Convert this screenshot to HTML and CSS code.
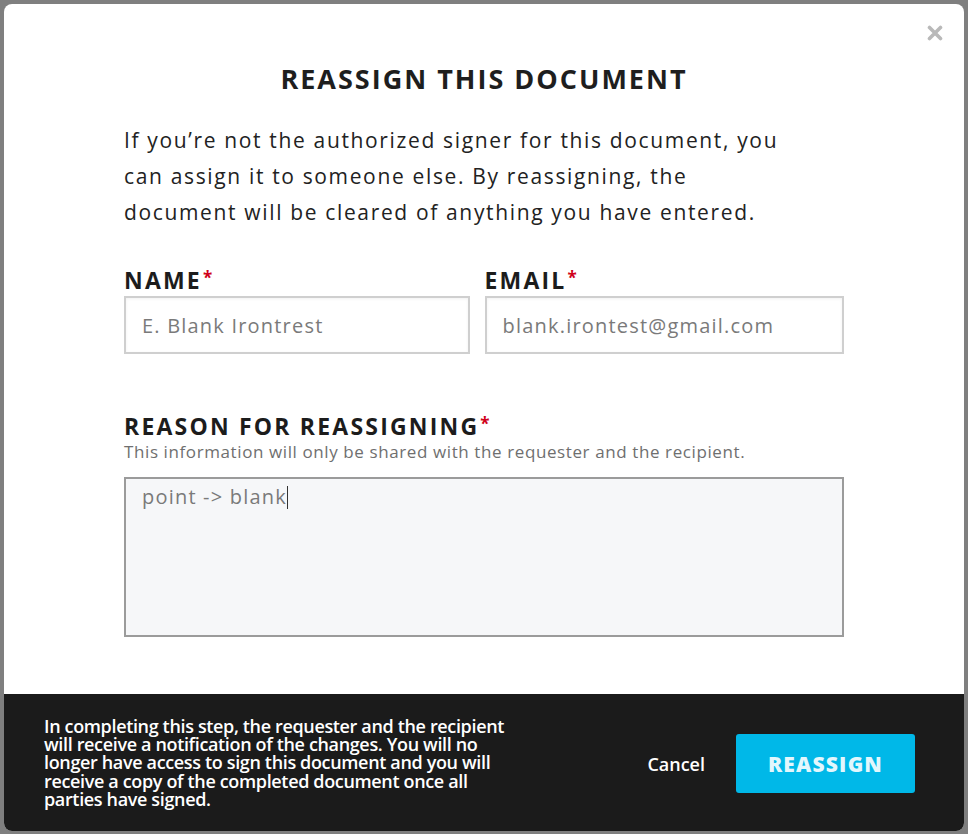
FILE: index.html
```html
<!DOCTYPE html>
<html>
<head>
<meta charset="utf-8">
<link rel="stylesheet" href="styles.css">
</head>
<body>
<div class="modal">
  <button class="close" aria-label="Close"><svg width="16" height="16" viewBox="0 0 16 16"><path d="M2.5 2.5L13.5 13.5M13.5 2.5L2.5 13.5" stroke="#b9b9b9" stroke-width="3.6" stroke-linecap="round"/></svg></button>
  <div class="content">
    <h1 class="title">REASSIGN THIS DOCUMENT</h1>
    <p class="intro">If you’re not the authorized signer for this document, you can assign it to someone else. By reassigning, the document will be cleared of anything you have entered.</p>
    <div class="row">
      <div class="field">
        <label class="label">NAME<span class="req">*</span></label>
        <div class="input">E. Blank Irontrest</div>
      </div>
      <div class="field">
        <label class="label">EMAIL<span class="req">*</span></label>
        <div class="input">blank.irontest@gmail.com</div>
      </div>
    </div>
    <div class="reason">
      <label class="label">REASON FOR REASSIGNING<span class="req">*</span></label>
      <div class="hint">This information will only be shared with the requester and the recipient.</div>
      <div class="textarea">point -&gt; blank<span class="caret"></span></div>
    </div>
  </div>
  <div class="footer">
    <p class="notice">In completing this step, the requester and the recipient will receive a notification of the changes. You will no longer have access to sign this document and you will receive a copy of the completed document once all parties have signed.</p>
    <div class="actions">
      <span class="cancel">Cancel</span>
      <span class="primary">REASSIGN</span>
    </div>
  </div>
</div>
</body>
</html>
```
FILE: styles.css
```css
html, body {
  margin: 0;
  padding: 0;
}
body {
  background: #7f7f7f;
  width: 968px;
  height: 834px;
  padding: 4px;
  box-sizing: border-box;
  font-family: "Open Sans", Lato, sans-serif;
}
.modal {
  position: relative;
  width: 960px;
  height: 827px;
  background: #fff;
  border-radius: 8px;
  overflow: hidden;
  display: flex;
  flex-direction: column;
}
.close {
  position: absolute;
  top: 21px;
  right: 21px;
  border: 0;
  background: none;
  padding: 0;
  width: 16px;
  height: 16px;
  line-height: 0;
}
.content {
  flex: 1;
  padding: 58px 120px 0 120px;
}
.title {
  margin: 0;
  text-align: center;
  font-size: 27px;
  line-height: 34px;
  font-weight: 700;
  letter-spacing: 2px;
  color: #1e1e1e;
}
.intro {
  margin: 26px 0 0 0;
  font-size: 21px;
  line-height: 36px;
  letter-spacing: 1.65px;
  color: #222;
  width: 668px;
}
.row {
  display: flex;
  gap: 15px;
  margin-top: 34px;
}
.field {
  display: flex;
  flex-direction: column;
}
.field:first-child { width: 346px; }
.field:last-child { width: 360px; }
.label {
  display: block;
  font-size: 23px;
  line-height: 28px;
  font-weight: 700;
  letter-spacing: 2.2px;
  color: #1c1c1c;
}
.req {
  color: #d0021b;
  font-size: 17px;
  vertical-align: 5px;
  margin-left: 1px;
}
.input {
  margin-top: 2px;
  height: 54px;
  border: 2px solid #cfcfcf;
  box-sizing: content-box;
  padding: 0 0 0 16px;
  display: flex;
  align-items: center;
  font-size: 20px;
  letter-spacing: 1.2px;
  color: #7a7a7a;
  box-shadow: inset 0 1px 3px rgba(0,0,0,0.06);
}
.reason {
  margin-top: 56px;
}
.hint {
  margin-top: 2px;
  font-size: 17px;
  line-height: 20px;
  letter-spacing: 0.6px;
  color: #6f6f6f;
}
.textarea {
  margin-top: 15px;
  height: 160px;
  border: 2px solid #9b9b9b;
  background: #f6f7f9;
  padding: 4px 16px;
  box-sizing: border-box;
  font-size: 20px;
  line-height: 28px;
  letter-spacing: 1.2px;
  color: #7a7a7a;
}
.caret {
  display: inline-block;
  width: 1px;
  height: 23px;
  background: #333;
  vertical-align: -5px;
  margin-left: 0;
}
.footer {
  height: 137px;
  background: #1b1b1b;
  display: flex;
  align-items: center;
  justify-content: space-between;
  padding: 0 49px 0 40px;
  flex-shrink: 0;
}
.notice {
  margin: 0;
  width: 470px;
  color: #fff;
  font-size: 18px;
  line-height: 18.3px;
  font-weight: 600;
  letter-spacing: -0.35px;
}
.actions {
  display: flex;
  align-items: center;
  gap: 31px;
  margin-top: 2px;
}
.cancel {
  color: #fff;
  font-size: 18px;
  font-weight: 600;
  letter-spacing: 0;
}
.primary {
  width: 179px;
  height: 59px;
  border-radius: 3px;
  background: #00b8e8;
  color: #e3f7fd;
  display: flex;
  align-items: center;
  justify-content: center;
  font-size: 21px;
  font-weight: 800;
  letter-spacing: 1.2px;
}
```
